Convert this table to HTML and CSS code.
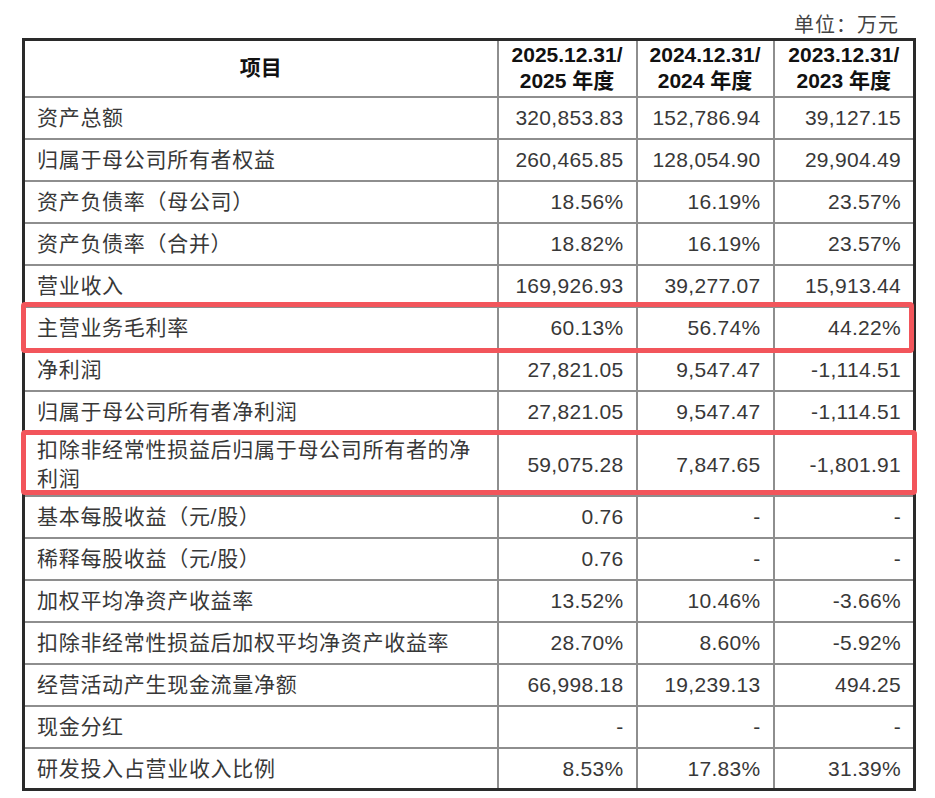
FILE: index.html
```html
<!DOCTYPE html>
<html lang="zh">
<head>
<meta charset="utf-8">
<title>主要财务数据</title>
<link rel="stylesheet" href="styles.css">
</head>
<body>
<div class="sheet">
  <div class="unit">单位：万元</div>
  <table class="fin">
    <colgroup>
      <col class="c-label">
      <col class="c-num">
      <col class="c-num2">
      <col class="c-num3">
    </colgroup>
    <thead>
      <tr>
        <th class="h-label">项目</th>
        <th>2025.12.31/<br>2025 年度</th>
        <th>2024.12.31/<br>2024 年度</th>
        <th>2023.12.31/<br>2023 年度</th>
      </tr>
    </thead>
    <tbody>
      <tr><td>资产总额</td><td>320,853.83</td><td>152,786.94</td><td>39,127.15</td></tr>
      <tr><td>归属于母公司所有者权益</td><td>260,465.85</td><td>128,054.90</td><td>29,904.49</td></tr>
      <tr><td>资产负债率（母公司）</td><td>18.56%</td><td>16.19%</td><td>23.57%</td></tr>
      <tr><td>资产负债率（合并）</td><td>18.82%</td><td>16.19%</td><td>23.57%</td></tr>
      <tr><td>营业收入</td><td>169,926.93</td><td>39,277.07</td><td>15,913.44</td></tr>
      <tr><td>主营业务毛利率</td><td>60.13%</td><td>56.74%</td><td>44.22%</td></tr>
      <tr><td>净利润</td><td>27,821.05</td><td>9,547.47</td><td>-1,114.51</td></tr>
      <tr><td>归属于母公司所有者净利润</td><td>27,821.05</td><td>9,547.47</td><td>-1,114.51</td></tr>
      <tr class="tall"><td>扣除非经常性损益后归属于母公司所有者的净利润</td><td>59,075.28</td><td>7,847.65</td><td>-1,801.91</td></tr>
      <tr><td>基本每股收益（元/股）</td><td>0.76</td><td>-</td><td>-</td></tr>
      <tr><td>稀释每股收益（元/股）</td><td>0.76</td><td>-</td><td>-</td></tr>
      <tr><td>加权平均净资产收益率</td><td>13.52%</td><td>10.46%</td><td>-3.66%</td></tr>
      <tr><td>扣除非经常性损益后加权平均净资产收益率</td><td>28.70%</td><td>8.60%</td><td>-5.92%</td></tr>
      <tr><td>经营活动产生现金流量净额</td><td>66,998.18</td><td>19,239.13</td><td>494.25</td></tr>
      <tr><td>现金分红</td><td>-</td><td>-</td><td>-</td></tr>
      <tr><td>研发投入占营业收入比例</td><td>8.53%</td><td>17.83%</td><td>31.39%</td></tr>
    </tbody>
  </table>
  <div class="mark mark-1"></div>
  <div class="mark mark-2"></div>
</div>
</body>
</html>
```

FILE: styles.css
```css
html, body {
  margin: 0;
  padding: 0;
  background: #ffffff;
}

.sheet {
  position: relative;
  width: 935px;
  height: 798px;
  padding-left: 22px;
  box-sizing: border-box;
  font-family: "Liberation Sans", "Noto Sans CJK SC", sans-serif;
  color: #333333;
}

.unit {
  width: 877px;
  height: 38px;
  line-height: 50px;
  text-align: right;
  font-size: 20px;
  color: #444444;
  letter-spacing: 1px;
  box-sizing: border-box;
}

.fin {
  width: 891px;
  table-layout: fixed;
  border-collapse: collapse;
  border: 3px solid #2a2a2a;
}

.c-label { width: 474px; }
.c-num { width: 139px; }
.c-num2 { width: 137px; }
.c-num3 { width: 141px; }

.fin th,
.fin td {
  border: 2px solid #8e8e8e;
  padding: 0 12px;
  box-sizing: border-box;
}

.fin th {
  height: 57px;
  font-size: 21px;
  font-weight: bold;
  line-height: 26px;
  color: #111111;
  text-align: center;
  padding: 0 4px;
}

.fin td {
  height: 42px;
  font-size: 21px;
  line-height: 29px;
  text-align: right;
  letter-spacing: 0.3px;
  color: #383838;
}

.fin td:first-child {
  text-align: left;
  letter-spacing: 0.7px;
  padding-left: 12px;
  padding-right: 12px;
}

.fin tr.tall td {
  height: 63px;
}

.mark {
  position: absolute;
  border: 5px solid #f2555b;
  border-radius: 4px;
  box-sizing: border-box;
}

.mark-1 {
  left: 21px;
  top: 302px;
  width: 893px;
  height: 51px;
}

.mark-2 {
  left: 21px;
  top: 430px;
  width: 896px;
  height: 65px;
}
```
